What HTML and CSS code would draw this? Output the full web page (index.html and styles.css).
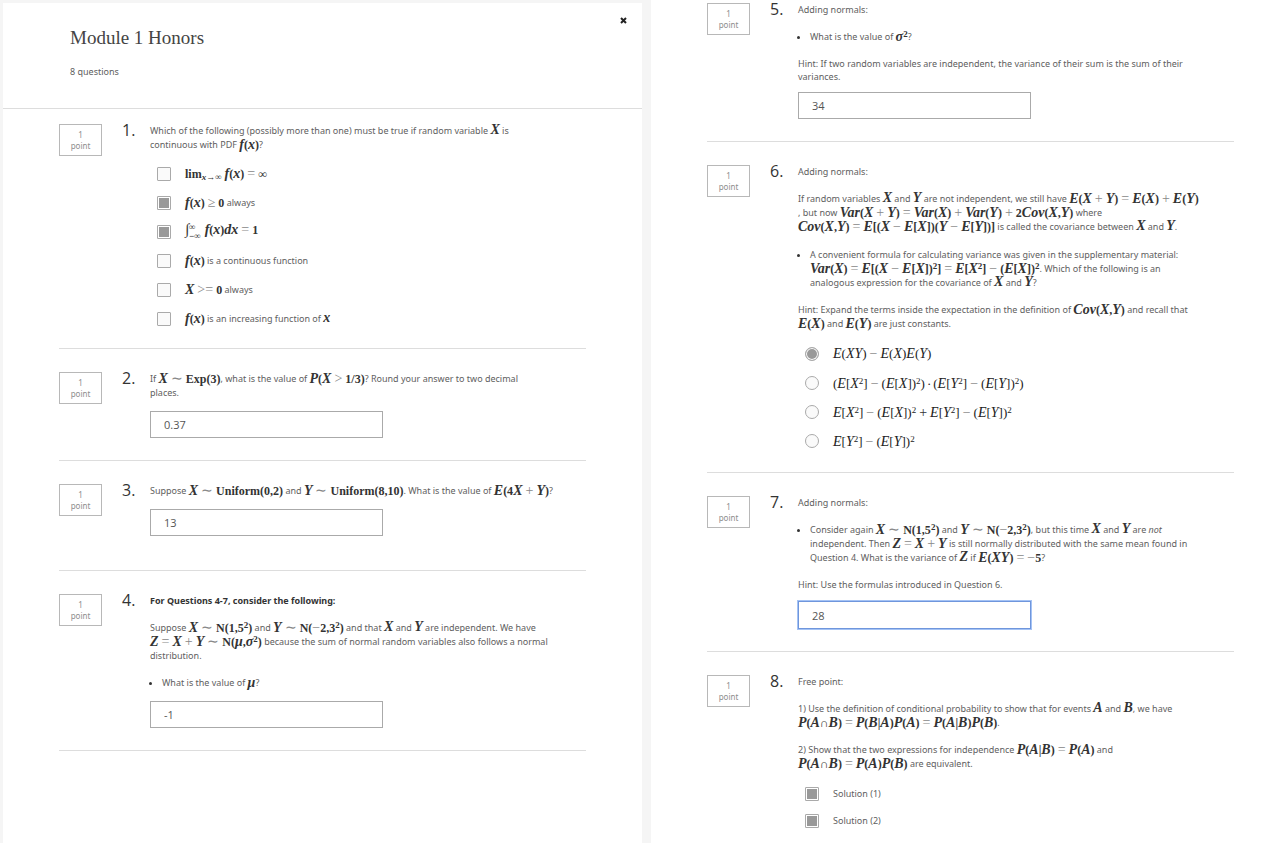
FILE: index.html
```html
<!DOCTYPE html>
<html lang="en">
<head>
<meta charset="utf-8">
<title>Module 1 Honors</title>
<link rel="stylesheet" href="styles.css">
</head>
<body>
<main class="page">
<section class="panel panel-left">
<header class="head">
<div>
<h1>Module 1 Honors</h1>
<p class="count">8 questions</p>
</div>
<button class="close" type="button" aria-label="Close"><svg viewBox="0 0 7 7" width="7" height="7"><path d="M1 1l5 5M6 1l-5 5" stroke="#222" stroke-width="2"/></svg></button>
</header>
<div class="list">

<article class="q first">
<div class="badge"><span>1</span><span>point</span></div>
<h2>1.</h2>
<div class="body">
<p>Which of the following (possibly more than one) must be true if random variable <span class="m up"><i>X</i></span> is<br>continuous with PDF <span class="m"><i>f</i>(<i>x</i>)</span>?</p>
<div class="options">
<label><input type="checkbox"><span><span class="m">lim<sub><i>x</i>→∞</sub> <i>f</i>(<i>x</i>)<span class="o">=</span>∞</span></span></label>
<label><input type="checkbox" checked><span><span class="m"><i>f</i>(<i>x</i>)<span class="o">≥</span>0</span> always</span></label>
<label><input type="checkbox" checked><span><span class="m"><span class="int">∫</span><span class="lims"><span>∞</span><span>−∞</span></span><i>f</i>(<i>x</i>)<i>dx</i><span class="o">=</span>1</span></span></label>
<label><input type="checkbox"><span><span class="m"><i>f</i>(<i>x</i>)</span> is a continuous function</span></label>
<label><input type="checkbox"><span><span class="m"><i>X</i><span class="o">&gt;=</span>0</span> always</span></label>
<label><input type="checkbox"><span><span class="m"><i>f</i>(<i>x</i>)</span> is an increasing function of <span class="m up"><i>x</i></span></span></label>
</div>
</div>
</article>

<article class="q">
<div class="badge"><span>1</span><span>point</span></div>
<h2>2.</h2>
<div class="body">
<p id="q2">If <span class="m"><i>X</i><span class="o">∼</span>Exp(3)</span>, what is the value of <span class="m"><i>P</i>(<i>X</i><span class="o">&gt;</span>1/3)</span>? Round your answer to two decimal<br>places.</p>
<input class="answer" type="text" value="0.37" aria-labelledby="q2">
</div>
</article>

<article class="q roomy">
<div class="badge"><span>1</span><span>point</span></div>
<h2>3.</h2>
<div class="body">
<p id="q3">Suppose <span class="m"><i>X</i><span class="o">∼</span>Uniform(0,2)</span> and <span class="m"><i>Y</i><span class="o">∼</span>Uniform(8,10)</span>. What is the value of <span class="m"><i>E</i>(4<i>X</i><span class="o">+</span><i>Y</i>)</span>?</p>
<input class="answer" type="text" value="13" aria-labelledby="q3">
</div>
</article>

<article class="q">
<div class="badge"><span>1</span><span>point</span></div>
<h2>4.</h2>
<div class="body">
<p><strong>For Questions 4-7, consider the following:</strong></p>
<p>Suppose <span class="m"><i>X</i><span class="o">∼</span>N(1,5<sup>2</sup>)</span> and <span class="m"><i>Y</i><span class="o">∼</span>N(<span class="n">−</span>2,3<sup>2</sup>)</span> and that <span class="m up"><i>X</i></span> and <span class="m up"><i>Y</i></span> are independent. We have<br><span class="m"><i>Z</i><span class="o">=</span><i>X</i><span class="o">+</span><i>Y</i><span class="o">∼</span>N(<i>μ</i>,<i>σ</i><sup>2</sup>)</span> because the sum of normal random variables also follows a normal<br>distribution.</p>
<ul><li id="q4">What is the value of <span class="m"><i>μ</i></span>?</li></ul>
<input class="answer" type="text" value="-1" aria-labelledby="q4">
</div>
</article>
</div>
</section>

<section class="panel panel-right">
<div class="list">
<article class="q first">
<div class="badge"><span>1</span><span>point</span></div>
<h2>5.</h2>
<div class="body">
<p>Adding normals:</p>
<ul><li id="q5">What is the value of <span class="m"><i>σ</i><sup>2</sup></span>?</li></ul>
<p class="plain">Hint: If two random variables are independent, the variance of their sum is the sum of their<br>variances.</p>
<input class="answer" type="text" value="34" aria-labelledby="q5">
</div>
</article>

<article class="q">
<div class="badge"><span>1</span><span>point</span></div>
<h2>6.</h2>
<div class="body">
<p>Adding normals:</p>
<p>If random variables <span class="m up"><i>X</i></span> and <span class="m up"><i>Y</i></span> are not independent, we still have <span class="m"><i>E</i>(<i>X</i><span class="o">+</span><i>Y</i>)<span class="o">=</span><i>E</i>(<i>X</i>)<span class="o">+</span><i>E</i>(<i>Y</i>)</span><br>, but now <span class="m"><i>Var</i>(<i>X</i><span class="o">+</span><i>Y</i>)<span class="o">=</span><i>Var</i>(<i>X</i>)<span class="o">+</span><i>Var</i>(<i>Y</i>)<span class="o">+</span>2<i>Cov</i>(<i>X</i>,<i>Y</i>)</span> where<br><span class="m"><i>Cov</i>(<i>X</i>,<i>Y</i>)<span class="o">=</span><i>E</i>[(<i>X</i><span class="o">−</span><i>E</i>[<i>X</i>])(<i>Y</i><span class="o">−</span><i>E</i>[<i>Y</i>])]</span> is called the covariance between <span class="m up"><i>X</i></span> and <span class="m up"><i>Y</i></span>.</p>
<ul><li>A convenient formula for calculating variance was given in the supplementary material:<br><span class="m"><i>Var</i>(<i>X</i>)<span class="o">=</span><i>E</i>[(<i>X</i><span class="o">−</span><i>E</i>[<i>X</i>])<sup>2</sup>]<span class="o">=</span><i>E</i>[<i>X</i><sup>2</sup>]<span class="o">−</span>(<i>E</i>[<i>X</i>])<sup>2</sup></span>. Which of the following is an<br>analogous expression for the covariance of <span class="m up"><i>X</i></span> and <span class="m up"><i>Y</i></span>?</li></ul>
<p>Hint: Expand the terms inside the expectation in the definition of <span class="m"><i>Cov</i>(<i>X</i>,<i>Y</i>)</span> and recall that<br><span class="m"><i>E</i>(<i>X</i>)</span> and <span class="m"><i>E</i>(<i>Y</i>)</span> are just constants.</p>
<div class="options light">
<label><input type="radio" name="q6" checked><span class="m"><i>E</i>(<i>XY</i>)<span class="o">−</span><i>E</i>(<i>X</i>)<i>E</i>(<i>Y</i>)</span></label>
<label><input type="radio" name="q6"><span class="m">(<i>E</i>[<i>X</i><sup>2</sup>]<span class="o">−</span>(<i>E</i>[<i>X</i>])<sup>2</sup>)<span class="dot">·</span>(<i>E</i>[<i>Y</i><sup>2</sup>]<span class="o">−</span>(<i>E</i>[<i>Y</i>])<sup>2</sup>)</span></label>
<label><input type="radio" name="q6"><span class="m"><i>E</i>[<i>X</i><sup>2</sup>]<span class="o">−</span>(<i>E</i>[<i>X</i>])<sup>2</sup><span class="o dark">+</span><i>E</i>[<i>Y</i><sup>2</sup>]<span class="o">−</span>(<i>E</i>[<i>Y</i>])<sup>2</sup></span></label>
<label><input type="radio" name="q6"><span class="m"><i>E</i>[<i>Y</i><sup>2</sup>]<span class="o">−</span>(<i>E</i>[<i>Y</i>])<sup>2</sup></span></label>
</div>
</div>
</article>

<article class="q">
<div class="badge"><span>1</span><span>point</span></div>
<h2>7.</h2>
<div class="body">
<p>Adding normals:</p>
<ul><li id="q7">Consider again <span class="m"><i>X</i><span class="o">∼</span>N(1,5<sup>2</sup>)</span> and <span class="m"><i>Y</i><span class="o">∼</span>N(<span class="n">−</span>2,3<sup>2</sup>)</span>, but this time <span class="m up"><i>X</i></span> and <span class="m up"><i>Y</i></span> are <em>not</em><br>independent. Then <span class="m"><i>Z</i><span class="o">=</span><i>X</i><span class="o">+</span><i>Y</i></span> is still normally distributed with the same mean found in<br>Question 4. What is the variance of <span class="m up"><i>Z</i></span> if <span class="m"><i>E</i>(<i>XY</i>)<span class="o">=</span><span class="n">−</span>5</span>?</li></ul>
<p>Hint: Use the formulas introduced in Question 6.</p>
<input class="answer active" type="text" value="28" aria-labelledby="q7">
</div>
</article>

<article class="q">
<div class="badge"><span>1</span><span>point</span></div>
<h2>8.</h2>
<div class="body">
<p>Free point:</p>
<p>1) Use the definition of conditional probability to show that for events <span class="m up"><i>A</i></span> and <span class="m up"><i>B</i></span>, we have<br><span class="m"><i>P</i>(<i>A</i>∩<i>B</i>)<span class="o">=</span><i>P</i>(<i>B</i>|<i>A</i>)<i>P</i>(<i>A</i>)<span class="o">=</span><i>P</i>(<i>A</i>|<i>B</i>)<i>P</i>(<i>B</i>)</span>.</p>
<p>2) Show that the two expressions for independence <span class="m"><i>P</i>(<i>A</i>|<i>B</i>)<span class="o">=</span><i>P</i>(<i>A</i>)</span> and<br><span class="m"><i>P</i>(<i>A</i>∩<i>B</i>)<span class="o">=</span><i>P</i>(<i>A</i>)<i>P</i>(<i>B</i>)</span> are equivalent.</p>
<div class="options tight">
<label><input type="checkbox" checked><span>Solution (1)</span></label>
<label><input type="checkbox" checked><span>Solution (2)</span></label>
</div>
</div>
</article>
</div>
</section>
</main>
</body>
</html>
```
FILE: styles.css
```css
* { box-sizing: border-box; }

body {
  margin: 0;
  background: #fff;
  color: #606060;
  font: 9px/14px "Noto Sans", "Open Sans", sans-serif;
}

h1, h2, p, ul { margin: 0; padding: 0; font-weight: 400; }

.page {
  display: grid;
  grid-template-columns: 651fr 635fr;
  min-height: 100vh;
}

.panel-left {
  border: solid #f5f5f5;
  border-width: 3px 9px 0 3px;
}
.panel-right { padding-top: 3px; }

.head {
  display: flex;
  justify-content: space-between;
  align-items: flex-start;
  padding: 23px 15px 29px 67px;
  border-bottom: 1px solid #ddd;
}
h1 {
  font: 19px/24px "Liberation Serif", serif;
  color: #444;
}
.count { margin-top: 15px; }
.close {
  display: flex;
  margin: -9px 0 0;
  padding: 0;
  border: 0;
  background: none;
}

.list { padding: 0 56px; }
.panel-left .list { padding-top: 15px; }
.panel-right .list { padding-right: 52px; }

.q {
  display: grid;
  grid-template-columns: 43px 28px minmax(0, 1fr);
  column-gap: 20px;
  align-items: start;
  padding: 23px 0 22px;
  border-bottom: 1px solid #ddd;
}
.q.first { padding-top: 0; }
.q.roomy { padding-bottom: 34px; }
.q:has(.options) { padding-bottom: 15px; }
.q:has(.light) { padding-bottom: 17px; }
.q:has(.light) ul { margin-top: 14px; }
.panel-right .q:last-child { border-bottom: 0; padding-bottom: 0; }

.badge {
  display: flex;
  flex-direction: column;
  align-items: center;
  height: 32px;
  padding-top: 4px;
  border: 1px solid #b8b8b8;
  color: #8d8d8d;
  font-size: 8px;
  line-height: 11px;
}
h2 {
  font: 16px/12px "Open Sans", "Noto Sans", sans-serif;
  color: #333;
}
.body { margin-left: -20px; white-space: nowrap; }
.body p + p, .body ul, .body ul + p { margin-top: 13px; }
.plain { line-height: 13px; }
strong { color: #333; }
ul { padding-left: 12px; }
li::marker { color: #333; }

.m {
  font: bold 12px/1px "Liberation Serif", serif;
  color: #333;
  vertical-align: -1px;
  white-space: nowrap;
}
.m i { font-size: 14px; line-height: 1px; }
.m.up { vertical-align: 0; }
.o { margin: 0 3px; font-size: 14px; font-weight: 400; color: #888; }
.n { font-size: 14px; font-weight: 400; color: #888; }
.dot { margin: 0 2px; }
.dark { color: #333; }
sup, sub { font-size: 9px; line-height: 1px; }
sup { vertical-align: 4px; }
sub { vertical-align: -2px; }
.m sub i { font-size: 9px; }
.int { font-size: 15px; font-weight: 400; }
.lims {
  display: inline-flex;
  flex-direction: column;
  margin-right: 4px;
  vertical-align: middle;
  font-size: 9px;
  line-height: 9px;
}

.options { display: grid; grid-auto-rows: 29px; margin-top: 7px; }
.options.light { margin-top: 8px; }
.options.tight { grid-auto-rows: 27px; margin-top: 9px; }
.options label {
  display: flex;
  align-items: center;
  gap: 14px;
  padding-left: 7px;
}
.light .m { font-size: 13px; font-weight: 400; color: #222; }

.options input {
  flex: none;
  width: 14px;
  height: 14px;
  margin: 0;
  appearance: none;
  border: 1px solid #aaa;
  border-radius: 1px;
  background: #fafafa;
}
.options input[type="radio"] { border-radius: 50%; }
.options input:checked {
  background: #999;
  box-shadow: inset 0 0 0 1px #fff;
}

.answer {
  display: block;
  width: 233px;
  height: 27px;
  margin-top: 11px;
  padding: 0 13px;
  border: 1px solid #aaa;
  background: #fff;
  color: #555;
  font: 11px "Open Sans", "Noto Sans", sans-serif;
}
ul + p + .answer { margin-top: 9px; }
.answer.active {
  height: 28px;
  border-color: #6f96dc;
  box-shadow: 0 0 0 1px #a5c3f5;
}
```
